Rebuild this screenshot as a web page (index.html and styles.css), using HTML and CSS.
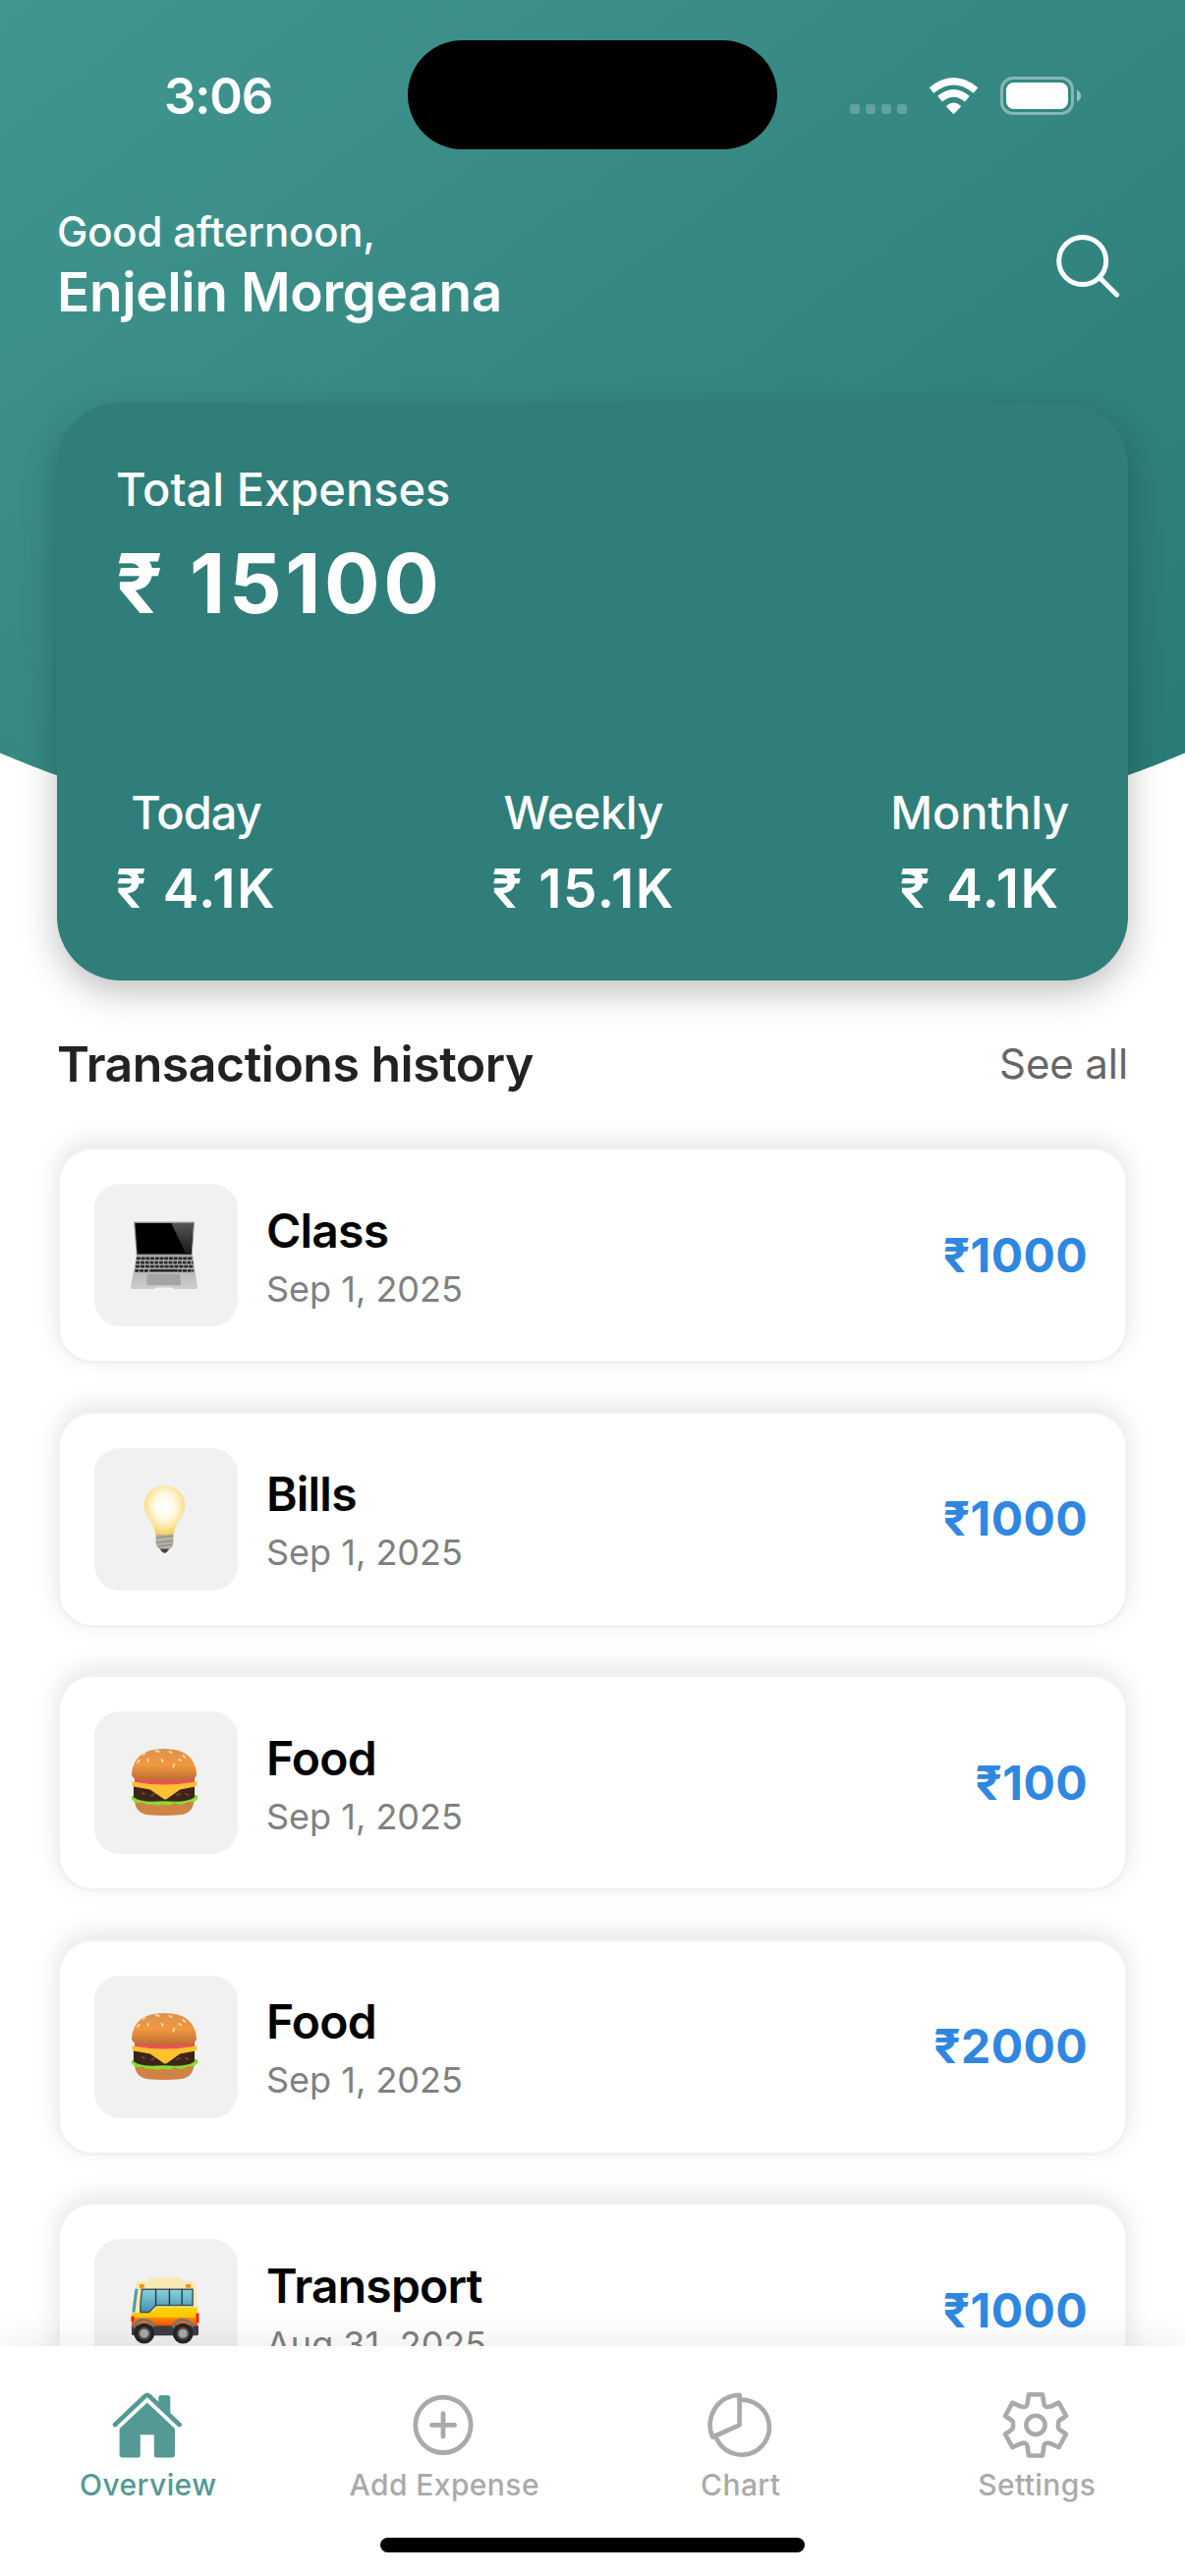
FILE: index.html
```html
<!DOCTYPE html>
<html lang="en">
<head>
<meta charset="utf-8">
<title>Overview</title>
<link rel="stylesheet" href="styles.css">
</head>
<body>
<div class="screen">
  <svg class="backdrop" viewBox="0 0 1206 900" aria-hidden="true">
    <defs>
      <linearGradient id="teal" gradientUnits="userSpaceOnUse" x1="100" y1="-100" x2="900" y2="960">
        <stop offset="0" stop-color="#429690"/>
        <stop offset="1" stop-color="#2a7c76"/>
      </linearGradient>
    </defs>
    <path d="M0 0H1206V766.500C1166 782 1006 861 603 861C200 861 40 782 0 766.500Z" fill="url(#teal)"/>
  </svg>

  <div class="status">
    <div class="time">3:06</div>
    <div class="island"></div>
    <svg class="status-icons" viewBox="0 0 236 40" aria-hidden="true">
      <g fill="#fff" fill-opacity=".22">
        <rect x="0" y="28" width="10" height="10" rx="3"/><rect x="16" y="28" width="10" height="10" rx="3"/><rect x="32" y="28" width="10" height="10" rx="3"/><rect x="48" y="28" width="10" height="10" rx="3"/>
      </g>
      <g fill="none" stroke="#fff" stroke-width="7.4">
        <path d="M83 14Q105.500 -4.500 128 14"/>
        <path d="M91.600 22.600Q105.500 11 119.400 22.600"/>
      </g>
      <path d="M98.500 29.500Q105.500 23.500 112.500 29.500Q113.200 30.200 112.500 31L106.500 37.200Q105.500 38.200 104.500 37.200L98.500 31Q97.800 30.200 98.500 29.500Z" fill="#fff"/>
      <rect x="154.500" y="1.500" width="72" height="36" rx="11.500" fill="none" stroke="#fff" stroke-opacity=".4" stroke-width="3"/>
      <rect x="159" y="6" width="63" height="27" rx="8" fill="#fff"/>
      <path d="M231 13.500Q235 15.500 235 19.500Q235 23.500 231 25.500Z" fill="#fff" fill-opacity=".5"/>
    </svg>
  </div>

  <header class="greeting">
    <div>
      <div class="hello">Good afternoon,</div>
      <div class="name">Enjelin Morgeana</div>
    </div>
    <svg class="search" viewBox="0 0 66 66" fill="none" stroke="#fff" stroke-width="5" stroke-linecap="round" aria-hidden="true">
      <circle cx="27.700" cy="27.500" r="24"/><path d="M45.500 45L62.500 62"/>
    </svg>
  </header>

  <section class="summary">
    <div class="total-label">Total Expenses</div>
    <div class="total">₹ 15100</div>
    <div class="periods">
      <div class="period"><span class="today">Today</span><b>₹ 4.1K</b></div>
      <div class="period"><span class="weekly">Weekly</span><b>₹ 15.1K</b></div>
      <div class="period"><span class="monthly">Monthly</span><b>₹ 4.1K</b></div>
    </div>
  </section>

  <div class="section-head">
    <h2>Transactions history</h2>
    <a>See all</a>
  </div>

  <svg class="defs" aria-hidden="true">
    <defs>
      <linearGradient id="metal" x2="0" y2="1"><stop stop-color="#aaa"/><stop offset="1" stop-color="#ccc"/></linearGradient>
      <linearGradient id="glare" x2="0" y2="1"><stop stop-color="#555"/><stop offset="1" stop-color="#181818"/></linearGradient>
      <radialGradient id="glow" cx=".5" cy=".42" r=".6"><stop stop-color="#fff"/><stop offset=".4" stop-color="#fffbea"/><stop offset=".72" stop-color="#fae6a0"/><stop offset="1" stop-color="#f3cc58"/></radialGradient>
      <linearGradient id="bun" x2="0" y2="1"><stop stop-color="#dc9350"/><stop offset=".5" stop-color="#f1973f"/><stop offset="1" stop-color="#b86c30"/></linearGradient>
      <linearGradient id="glass" x2="0" y2="1"><stop stop-color="#8bd3da"/><stop offset="1" stop-color="#408faf"/></linearGradient>
      <linearGradient id="paint" x2="0" y2="1"><stop stop-color="#ffd40a"/><stop offset=".5" stop-color="#ffc800"/><stop offset=".55" stop-color="#ff8a0a"/><stop offset="1" stop-color="#f34a08"/></linearGradient>
      <symbol id="burger" viewBox="0 0 72 72">
        <path d="M5 50H66Q68 66 54 69Q35 71 17 69Q4 66 5 50Z" fill="#cf8344"/>
        <path d="M2 50Q35 43 70 49Q72 53 66 56Q60 55 56 58Q51 60 46 57Q40 61 34 58Q28 61 22 58Q17 60 13 56Q7 59 2 53Z" fill="#86dc32"/>
        <path d="M4 38H67V51Q60 57 35 55Q11 57 4 51Z" fill="#3d2418"/>
        <path d="M12 46l4 2M22 50l4-3M48 49l5-2M57 47l4 2" stroke="#684230" stroke-width="2"/>
        <path d="M5 30H67V36Q35 42 5 36Z" fill="#ec5058"/>
        <path d="M3 35Q35 41 69 35Q71 38 68 40L52 43L38 53Q36 54 34 52L21 43L4 40Q1 38 3 35Z" fill="#ffc12f"/>
        <path d="M2 27Q4 1 35.500 1Q67 1 69 27Q69 32 60 33Q35 36 11 33Q2 32 2 27Z" fill="url(#bun)"/>
        <g stroke="#f4d5a0" stroke-width="2" stroke-linecap="round"><path d="M8 15l2-2M19 12v2M27 3l3 1M33 12l1 2M41 4l2 1M51 12l2 1M46 17l-1 3M55 8l2 2M14 7l2-2"/></g>
      </symbol>
    </defs>
  </svg>

  <main class="list">
    <article class="row">
      <div class="tile"><svg viewBox="0 0 72 72" aria-hidden="true">
        <path d="M4 1.500H67L64.500 37H7Z" fill="#999"/><path d="M5.500 3H65.500L63.500 35H7.800Z" fill="#000"/><path d="M43 3H65.500L63.500 35H58Z" fill="url(#glare)"/>
        <path d="M7 36.500H65L70 69Q70 71 68 71H46L44 69.500H27L25 71H3Q1 71 1 69Z" fill="url(#metal)"/>
        <g stroke="#292929" stroke-width="2.800"><path d="M7 39.500H65" stroke-dasharray="4 .8"/><path d="M6.500 43.700H65.500" stroke-dasharray="3.800 1"/><path d="M6 47.800H66" stroke-dasharray="4.200 .8"/><path d="M5.500 52H20M50 52H66" stroke-dasharray="4 .8"/><path d="M20.500 52H49.500"/></g>
        <path d="M18 55.500H52L53 67H17.500Z" fill="#a5a5a5"/>
      </svg></div>
      <div class="info"><h3>Class</h3><time>Sep 1, 2025</time></div>
      <div class="amount">₹1000</div>
    </article>
    <article class="row">
      <div class="tile"><svg viewBox="0 0 72 72" aria-hidden="true">
        <path d="M27 50H45V60Q45 65 40 67L38 70Q36 71.500 34 70L32 67Q27 65 27 60Z" fill="#b5b0a6"/>
        <path d="M27 55L45 53M27 60L45 58M29 64L43 62" stroke="#88847b" stroke-width="1"/>
        <path d="M31 66.500H41L38 70Q36 71.500 34 70Z" fill="#444"/>
        <path d="M36 1C24 1 15 10 15 21.500C15 34 26 39 26.500 51Q36 53 45.500 51C46 39 57 34 57 21.500C57 10 48 1 36 1Z" fill="url(#glow)"/>
      </svg></div>
      <div class="info"><h3>Bills</h3><time>Sep 1, 2025</time></div>
      <div class="amount">₹1000</div>
    </article>
    <article class="row">
      <div class="tile"><svg viewBox="0 0 72 72" aria-hidden="true"><use href="#burger"/></svg></div>
      <div class="info"><h3>Food</h3><time>Sep 1, 2025</time></div>
      <div class="amount">₹100</div>
    </article>
    <article class="row">
      <div class="tile"><svg viewBox="0 0 72 72" aria-hidden="true"><use href="#burger"/></svg></div>
      <div class="info"><h3>Food</h3><time>Sep 1, 2025</time></div>
      <div class="amount">₹2000</div>
    </article>
    <article class="row">
      <div class="tile"><svg viewBox="0 0 72 72" aria-hidden="true">
        <path d="M7 6H19L21 2.500H53L55 6H63Q69 7 69 13L70 41H2V34L6 12Z" fill="#f7e8b4"/>
        <path d="M2 39L22 38L28 33H70V53H2Z" fill="url(#paint)"/>
        <path d="M2 52H71V60Q71 62 69 62H4Q2 62 2 60Z" fill="#3f3f42"/>
        <path d="M11.500 14.500H65V31H27L20 38H11Q11 24 13 14.500Z" fill="url(#glass)" stroke="#3f5559" stroke-width="1.500"/>
        <path d="M27 14V32M41 14V31M54 14V31" stroke="#23454d" stroke-width="1.500"/>
        <path d="M7 14L4 38" stroke="#4a9ead" stroke-width="3"/>
        <path d="M10 9h5v4h-5zM58 9h5v4h-5z" fill="#f09010"/>
        <path d="M70 39V49M3 42V48" stroke="#e22a10" stroke-width="3"/>
        <g fill="#252528"><circle cx="15" cy="60" r="10.500"/><circle cx="55" cy="60" r="10.500"/></g>
        <path d="M4 54Q7 45 16 46Q23 47 25 53M45 54Q47 45 56 46Q63 47 66 53" fill="none" stroke="#777" stroke-width="3"/>
        <g fill="#aaa" stroke="#555" stroke-width="2"><circle cx="15" cy="60" r="5.500"/><circle cx="55" cy="60" r="5.500"/></g>
      </svg></div>
      <div class="info"><h3>Transport</h3><time>Aug 31, 2025</time></div>
      <div class="amount">₹1000</div>
    </article>
  </main>

  <nav class="tabs">
    <div class="tab-row">
      <div class="tab active">
        <svg viewBox="0 0 72 72" aria-hidden="true">
          <g fill="currentColor"><path d="M35.800 13.500L64 40V66Q64 69.500 60.500 69.500H45.600Q42.800 69.500 42.800 67V46.200H28.800V67Q28.800 69.500 26 69.500H11Q7.600 69.500 7.600 66V40Z"/><path d="M47.300 16V8.500Q47.300 6 50 6H56.600Q59.300 6 59.300 8.500V27.500Z"/></g>
          <path d="M3 36L33.800 6.800Q35.800 5 37.800 6.800L68.600 36" fill="none" stroke="currentColor" stroke-width="4.600" stroke-linecap="round"/>
        </svg>
        <span>Overview</span>
      </div>
      <div class="tab">
        <svg viewBox="0 0 72 72" fill="none" stroke="currentColor" stroke-width="4.800" stroke-linecap="round" aria-hidden="true"><circle cx="36" cy="36.300" r="28.200"/><path d="M36 24.700V47.900M24.400 36.300H47.600"/></svg>
        <span>Add Expense</span>
      </div>
      <div class="tab">
        <svg viewBox="0 0 72 72" fill="none" stroke="currentColor" stroke-width="4.700" stroke-linejoin="round" stroke-linecap="round" aria-hidden="true"><path d="M35.600 5.800V36.300L8.300 48.500A30.300 30.300 0 0 1 35.600 5.800Z"/><path d="M38 10.700A28 28 0 1 1 12.500 50.500"/></svg>
        <span>Chart</span>
      </div>
      <div class="tab">
        <svg viewBox="0 0 72 72" fill="none" stroke="currentColor" stroke-width="4.600" stroke-linejoin="round" aria-hidden="true"><circle cx="36" cy="36.300" r="9.600"/><path d="M29 5.300H43L44.500 15Q45 19 51 17.600L59.600 13.700L67 27L60.500 31.500Q59 32.500 59 34V38.600Q59 40.100 60.500 41.100L67 45.700L59.600 59L51 55.100Q45 53.500 44.500 57.700L43 67.500H29L27.500 57.700Q27 53.500 21 55.100L12.400 59L5 45.700L11.500 41.100Q13 40.100 13 38.600V34Q13 32.500 11.500 31.500L5 27L12.400 13.700L21 17.600Q27 19 27.500 15Z"/></svg>
        <span>Settings</span>
      </div>
    </div>
    <div class="home-bar"></div>
  </nav>
</div>
</body>
</html>
```
FILE: styles.css
```css
* { box-sizing: border-box; }
body { margin: 0; background: #fff; font-family: Inter, "Liberation Sans", sans-serif; }
h2, h3 { margin: 0; }
.screen { position: relative; width: 1206px; height: 2622px; overflow: hidden; display: flex; flex-direction: column; isolation: isolate; }
.backdrop { position: absolute; left: 0; top: 0; width: 1206px; height: 900px; z-index: -1; }
.defs { position: absolute; width: 0; height: 0; }

.status { flex: none; height: 195px; padding-top: 41px; display: grid; grid-template-columns: 415px 376px 1fr; align-items: start; }
.time { margin: 26px 0 0 167px; color: #fff; font-size: 51px; line-height: 62px; font-weight: 600; letter-spacing: -1.2px; }
.island { height: 111px; border-radius: 56px; background: #000; }
.status-icons { width: 236px; height: 40px; margin: 37px 0 0 74px; }

.greeting { flex: none; height: 215px; padding: 15px 66px 0 58px; display: flex; justify-content: space-between; color: #fff; }
.hello { font-size: 42px; line-height: 52px; font-weight: 450; letter-spacing: -.2px; }
.name { font-size: 55px; line-height: 70px; font-weight: 600; letter-spacing: -.4px; }
.search { width: 66px; height: 66px; margin-top: 28px; }

.summary { flex: none; height: 588px; margin: 0 58px; padding: 58px 60px 61px; border-radius: 65px; background: #2f7e79; box-shadow: 0 12px 36px rgba(0,0,0,.25); color: #fff; display: flex; flex-direction: column; }
.total-label { font-size: 47px; line-height: 60px; font-weight: 500; }
.total { font-size: 84px; line-height: 100px; margin-top: 16px; font-weight: 700; letter-spacing: 3.6px; }
.periods { margin-top: auto; display: flex; justify-content: space-between; }
.period { display: flex; flex-direction: column; align-items: center; font-size: 47px; line-height: 60px; font-weight: 450; }
.period b { font-size: 55px; line-height: 66px; margin-top: 14px; font-weight: 600; letter-spacing: 1.5px; }
.today { letter-spacing: -1px; }
.weekly { letter-spacing: -.5px; }
.monthly { letter-spacing: -.2px; }

.section-head { flex: none; height: 169px; padding: 53px 58px 0; display: flex; justify-content: space-between; }
.section-head h2 { font-size: 50px; line-height: 64px; font-weight: 600; color: #222; letter-spacing: -.5px; }
.section-head a { font-size: 42px; line-height: 64px; color: #666; letter-spacing: -.1px; }

.list { flex: none; margin: 0 58px; display: flex; flex-direction: column; gap: 47.5px; }
.row { height: 221px; padding: 0 38px 0 35px; border: 3px solid #f1f1f1; border-radius: 36px; background: #fff; box-shadow: 0 -6px 24px rgba(0,0,0,.1); display: flex; align-items: center; }
.tile { width: 146px; height: 145px; padding-right: 3px; border-radius: 26px; background: #f1f1f1; display: flex; align-items: center; justify-content: center; }
.tile svg { width: 71px; height: 71px; }
.info { flex: 1; padding: 2px 0 0 29px; display: flex; flex-direction: column; }
.info h3 { font-size: 48px; line-height: 62px; font-weight: 600; color: #000; letter-spacing: -.8px; }
.info time { font-size: 36px; line-height: 48px; color: #808080; margin-top: 4px; }
.amount { font-size: 48px; line-height: 60px; font-weight: 700; color: #2f87e0; letter-spacing: .4px; }

.tabs { position: absolute; left: 0; right: 0; bottom: 0; height: 234px; padding: 44px 0 24px; background: #fff; box-shadow: 0 -4px 36px rgba(0,0,0,.08); display: flex; flex-direction: column; align-items: center; justify-content: space-between; }
.tab-row { width: 100%; display: grid; grid-template-columns: repeat(4, 1fr); }
.tab { display: flex; flex-direction: column; align-items: center; color: #aaa; }
.tab.active { color: #549994; }
.tab svg { width: 72px; height: 72px; margin-left: -2px; }
.tab span { font-size: 30px; line-height: 36px; margin-top: 7px; font-weight: 500; letter-spacing: .4px; }
.home-bar { width: 432px; height: 15px; border-radius: 8px; background: #000; }
```
